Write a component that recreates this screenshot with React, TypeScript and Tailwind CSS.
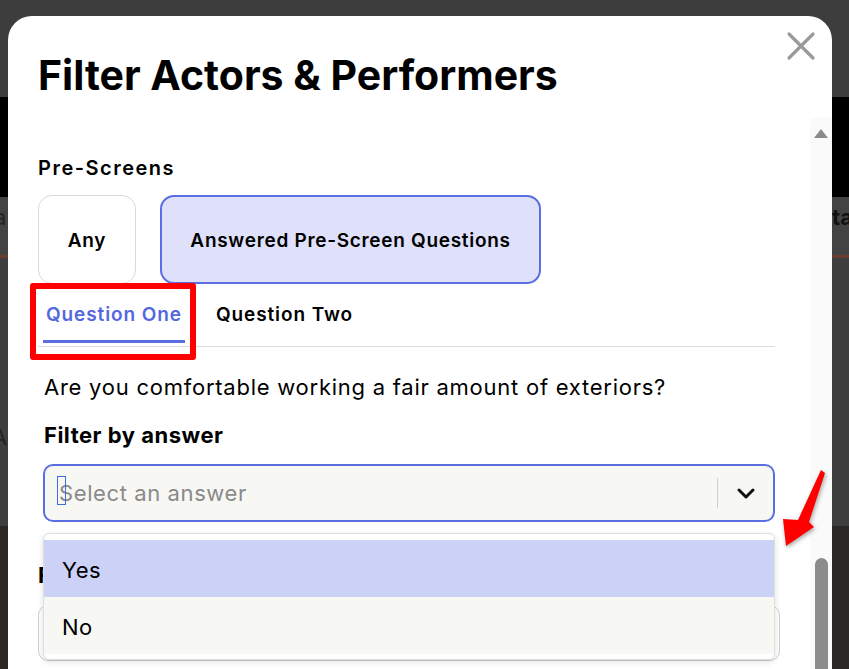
import React from "react";

const font = { fontFamily: "Inter, 'Noto Sans', sans-serif" };

function CloseIcon() {
  return (
    <svg width="30" height="30" viewBox="0 0 30 30" className="block">
      <path d="M3 3 L27 27 M27 3 L3 27" stroke="#9a9a9a" strokeWidth="3.2" strokeLinecap="round" />
    </svg>
  );
}

function Chevron() {
  return (
    <svg width="20" height="14" viewBox="0 0 20 14" className="block">
      <path d="M3 4 L10 11 L17 4" fill="none" stroke="#111" strokeWidth="3" strokeLinecap="round" strokeLinejoin="round" />
    </svg>
  );
}

function PointerArrow() {
  return (
    <svg width="60" height="90" viewBox="0 0 60 90" className="block" style={{ filter: "drop-shadow(1px 2px 2px rgba(0,0,0,0.35))" }}>
      <polygon points="45,6 49,9 33,58 38,63 10,82 7,55 22,56" fill="#ff0000" />
    </svg>
  );
}

export default function App() {
  return (
    <div className="relative w-[849px] h-[669px] overflow-hidden bg-[#3d3d3d]" style={font}>
      {/* page behind the dialog */}
      <div className="flex flex-col">
        <div className="h-[97px] bg-[#3d3d3d]" />
        <div className="h-[100px] bg-black" />
        <div className="h-[58px] bg-[#434343] flex items-start justify-between pt-[4px]">
          <span className="text-[22px] text-[#222] -ml-[6px]">a</span>
          <span className="text-[22px] font-bold text-[#111] mr-[-4px]">ta</span>
        </div>
        <div className="h-[3px] bg-[#6b3b30]" />
        <div className="h-[268px] bg-[#3e3e3e] flex flex-col justify-center">
          <span className="text-[22px] text-[#222] -ml-[8px] mt-[90px]">A</span>
        </div>
        <div className="h-[143px] bg-[#2c2826]" />
      </div>

      {/* dialog */}
      <div className="absolute left-[8px] top-[16px] w-[824px] h-[700px] bg-white rounded-t-[24px] flex flex-col">
        <div className="relative h-[102px] shrink-0 pl-[30px] pt-[35px]">
          <h1 className="text-[41px] leading-[48px] font-bold text-black">Filter Actors &amp; Performers</h1>
          <button className="absolute right-[16px] top-[15px]">
            <CloseIcon />
          </button>
        </div>

        <div className="flex flex-1 min-h-0">
          <div className="flex-1 pl-[30px] pr-[35px] pt-[38px]">
            <div className="text-[20px] leading-[24px] font-semibold text-black tracking-[1.5px]">Pre-Screens</div>
            <div className="flex gap-[24px] mt-[15px]">
              <div className="w-[98px] h-[89px] pt-[3px] rounded-[14px] border border-[#d9d9d9] flex items-center justify-center text-[19px] font-semibold text-black tracking-[0.7px]">
                Any
              </div>
              <div className="w-[381px] h-[89px] pt-[3px] rounded-[14px] border-2 border-[#5b6ee1] bg-[#dfe1fa] flex items-center justify-center text-[19px] font-semibold text-black tracking-[0.7px]">
                Answered Pre-Screen Questions
              </div>
            </div>

            <div className="flex border-b border-[#dcdcdc] pl-[5px] gap-[28px]">
              <div className="h-[62px] px-[3px] pt-[1px] flex items-center text-[19px] font-semibold text-[#5468e0] tracking-[0.9px] relative">
                Question One
                <span className="absolute left-0 right-0 bottom-[3px] h-[3px] bg-[#5b6ee1]" />
              </div>
              <div className="h-[62px] px-[3px] pt-[1px] flex items-center text-[19px] font-semibold text-black tracking-[0.9px]">Question Two</div>
            </div>

            <div className="pl-[6px]">
              <div className="mt-[26px] text-[22px] leading-[28px] text-black tracking-[0.75px]">Are you comfortable working a fair amount of exteriors?</div>
              <div className="mt-[20px] text-[22px] leading-[28px] font-bold text-black tracking-[0.5px]">Filter by answer</div>
              <div className="mt-[15px] h-[58px] -ml-[1px] rounded-[10px] border-2 border-[#5b6ee1] bg-[#f7f7f4] flex items-center">
                <div className="flex-1 pl-[14px] pt-[1px] flex items-center">
                  <span className="relative text-[22px] text-[#8a8a8a] tracking-[0.6px]">
                    <span className="absolute -left-[2px] -top-[1px] w-[9px] h-[29px] border-[1.5px] border-[#3b6fe0]" />
                    Select an answer
                  </span>
                </div>
                <div className="w-px h-[30px] bg-[#cfcfcf]" />
                <div className="w-[55px] flex items-center justify-center">
                  <Chevron />
                </div>
              </div>
              <div className="mt-[39px] -ml-[6px] text-[22px] leading-[28px] font-bold text-black tracking-[0.5px]">Filter by role</div>
              <div className="mt-[16px] -ml-[6px] mr-[-5px] h-[56px] rounded-[10px] border border-[#cfcfcf] bg-white" />
            </div>
          </div>

          {/* scrollbar */}
          <div className="w-[22px] shrink-0 bg-[#fafafa] flex flex-col items-center pt-[11px]">
            <div className="w-0 h-0 border-l-[7px] border-r-[7px] border-b-[9px] border-l-transparent border-r-transparent border-b-[#8a8a8a]" />
            <div className="mt-[420px] w-[13px] h-[200px] shrink-0 rounded-full bg-[#8c8c8c]" />
          </div>
        </div>
      </div>

      {/* open menu of the answer select */}
      <div className="absolute left-[43px] top-[533px] w-[732px] h-[127px] bg-white rounded-[6px] border border-[#dedede] shadow-[0_2px_6px_rgba(0,0,0,0.12)] py-[6px]">
        <div className="h-[57px] bg-[#ccd1f6] flex items-center pl-[18px] pt-[4px] text-[22px] text-black tracking-[0.5px]">Yes</div>
        <div className="h-[57px] bg-[#f7f7f4] flex items-center pl-[18px] pt-[4px] text-[22px] text-black tracking-[0.5px]">No</div>
      </div>

      {/* annotation marks */}
      <div className="absolute left-[30px] top-[283px] w-[166px] h-[77px] border-[6px] border-[#ff0000] rounded-[3px]" />
      <div className="absolute left-[776px] top-[464px]">
        <PointerArrow />
      </div>
    </div>
  );
}
